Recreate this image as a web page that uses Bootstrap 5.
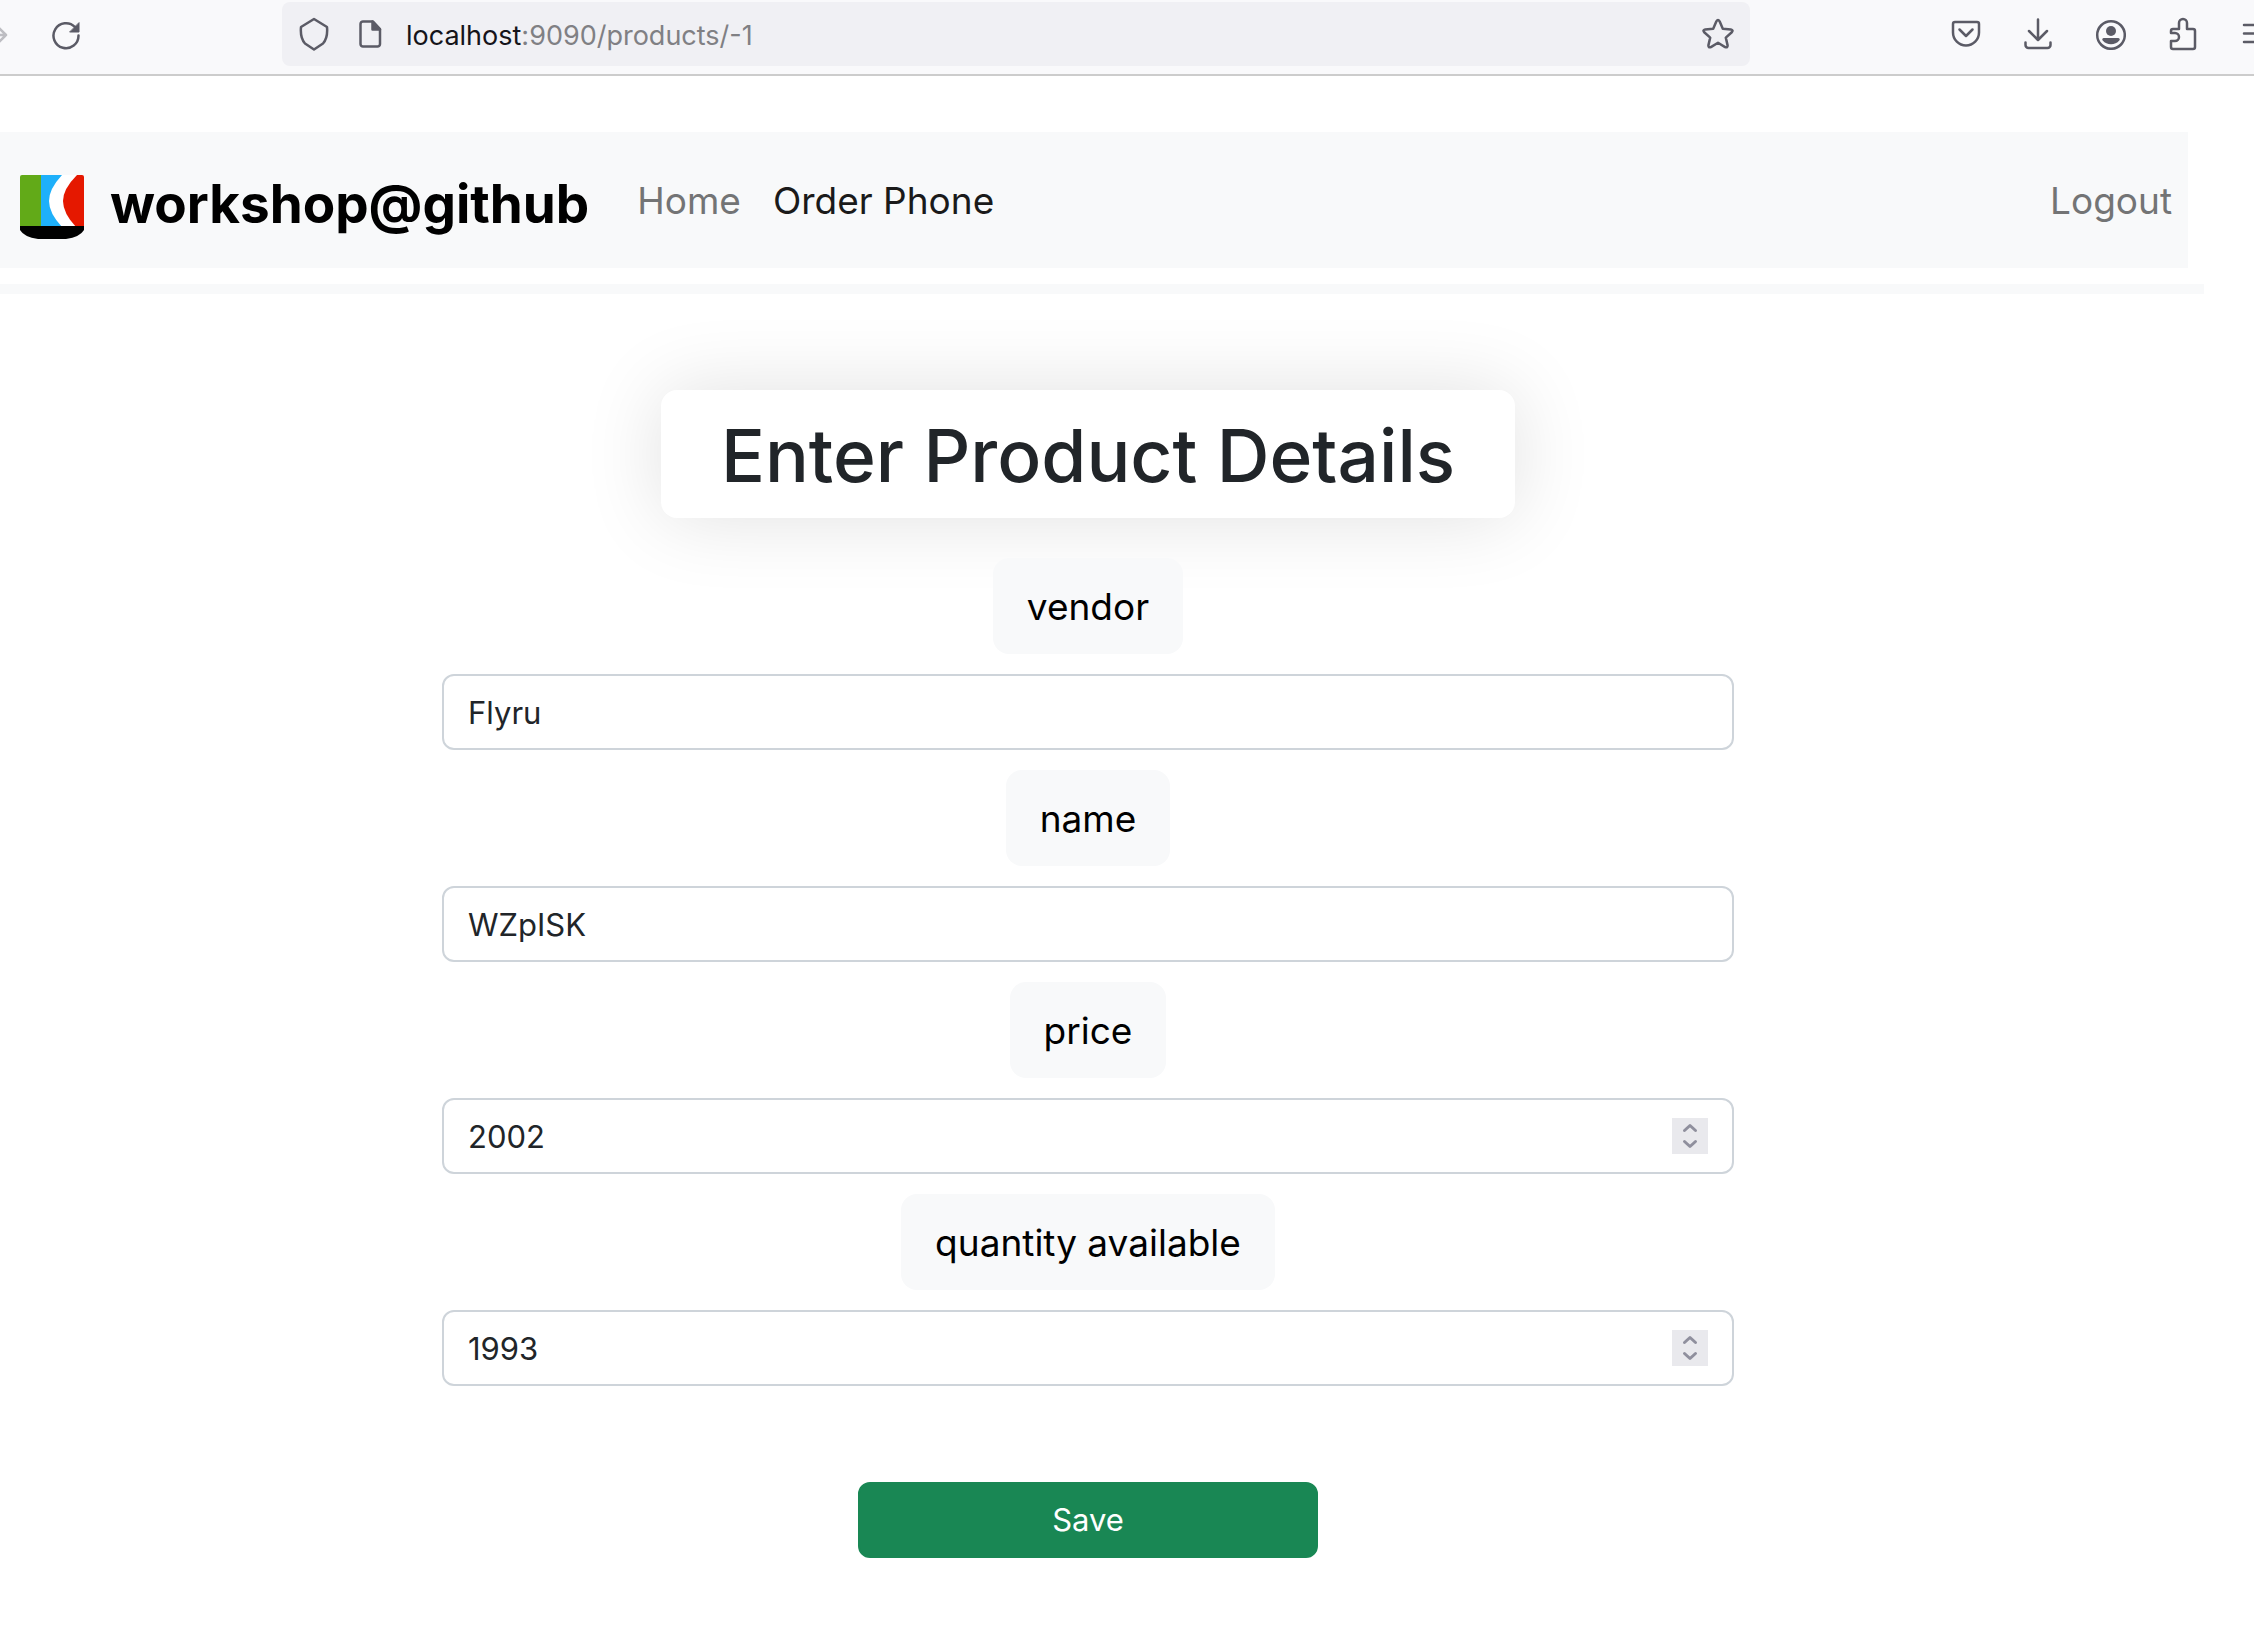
<!DOCTYPE html>
<html lang="en">
<head>
<meta charset="utf-8">
<meta name="viewport" content="width=device-width, initial-scale=1">
<title>Product details</title>
<link href="https://cdn.jsdelivr.net/npm/bootstrap@5.3.0/dist/css/bootstrap.min.css" rel="stylesheet">
<style>
  body { font-family: Inter, "Liberation Sans", sans-serif; font-size: 32px; background: #fff; overflow-x: hidden; }

  /* browser toolbar */
  .toolbar { height: 76px; padding: 2px 0 8px; background: #f9f9fb; border-bottom: 2px solid #ccc; overflow: hidden; }
  .toolbar svg { display: block; fill: none; stroke: #5b5b66; stroke-width: 2.5; stroke-linecap: round; stroke-linejoin: round; }
  .tool-btn { width: 72px; height: 64px; border: 0; padding: 0; background: none; flex: none; display: flex; align-items: center; justify-content: center; }
  .tools-left { width: 282px; flex: none; }
  .tools-left .tool-btn:first-child { margin-left: -42px; }
  .tools-right { width: 504px; padding-left: 180px; flex: none; }
  .address { height: 64px; background: #f0f0f4; border-radius: 8px; padding: 0 16px; min-width: 0; }
  .page-icon { margin: 0 21px 0 27px; }
  .address-text { font-size: 27px; line-height: 40px; padding-top: 3px; color: #808084; white-space: nowrap; }
  .address-text b { font-weight: 400; color: #15141a; }

  /* site header */
  .site-head { margin: 40px 50px 0 0; padding: 16px 16px 16px 0; border-bottom: 10px solid #f8f9fa; }
  .site-nav { height: 136px; padding: 0 0 0 20px; }
  .site-nav .navbar-brand { font-size: 53px; line-height: 64px; font-weight: 700; color: #000; gap: 26px; margin-right: 32px; padding: 14px 0 0; }
  .site-nav .navbar-brand span { padding-bottom: 6px; }
  .site-nav .nav-link { font-size: 37px; line-height: 60px; padding: 10px 16px 8px !important; color: #737475; }
  .site-nav .nav-link.active { color: #1a1a1a; }

  /* form */
  .page-main { padding: 96px 78px 0 0; }
  .page-title { font-size: 73px; line-height: 96px; font-weight: 500; color: #212529; padding: 18px 60px 14px; border-radius: 16px; background: #fff; box-shadow: 0 0 80px rgba(0,0,0,.12); margin: 0 0 40px; }
  .product-form { max-width: 1292px; }
  .field-label { font-size: 37px; line-height: 48px; padding: 25px 34px 23px; border-radius: 16px; background: #f8f9fa; color: #000; margin-bottom: 20px; position: relative; }
  .product-form .form-control { height: 76px; font-size: 31px; line-height: 48px; padding: 12px 24px; border: 2px solid #ced4da; border-radius: 12px; color: #212529; margin-bottom: 20px; }
  input[type=number]::-webkit-inner-spin-button {
    -webkit-appearance: none; opacity: 1; width: 36px; height: 36px; margin: 0;
    background: #e9e9ed url("data:image/svg+xml,%3Csvg xmlns='http://www.w3.org/2000/svg' width='36' height='36' fill='none' stroke='%238f8f9d' stroke-width='3' stroke-linecap='round' stroke-linejoin='round'%3E%3Cpath d='M12.500 12.500l5.500-5 5.500 5M12.500 23.500l5.500 5 5.500-5'/%3E%3C/svg%3E") center no-repeat;
  }
  .save-btn { width: 460px; max-width: 100%; height: 76px; font-size: 31px; line-height: 48px; padding: 12px 24px; border-radius: 12px; margin-top: 76px; background: #198754; border: 2px solid #198754; }
</style>
<script src="https://cdn.jsdelivr.net/npm/bootstrap@5.3.0/dist/js/bootstrap.bundle.min.js"></script>
</head>
<body>

<div class="toolbar d-flex align-items-center">
  <div class="tools-left d-flex align-items-center">
    <button class="tool-btn" type="button" aria-label="Forward" disabled>
      <svg width="32" height="32" viewBox="0 0 32 32" style="stroke:#bdbdc2"><path d="M4 17h24M18 7l10 10-10 10"/></svg>
    </button>
    <button class="tool-btn" type="button" aria-label="Reload">
      <svg width="32" height="32" viewBox="0 0 32 32"><path d="M28.500 17.500A12.500 12.500 0 1 1 25 9"/><path d="M29 5v9h-9z" fill="#5b5b66" stroke-width="1"/></svg>
    </button>
  </div>
  <div class="address d-flex align-items-center flex-grow-1">
    <svg width="32" height="34" viewBox="0 0 32 34"><path d="M16 2 29 10Q30 21 25 26.500L16 32.500 7 26.500Q2 21 3 10Z"/></svg>
    <svg class="page-icon" width="28" height="32" viewBox="2 0 28 32"><path d="M8 3.500h10l7 7.500v15a2.500 2.500 0 0 1-2.500 2.500H8A2.500 2.500 0 0 1 5.500 26V6A2.500 2.500 0 0 1 8 3.500z"/><path d="M17.500 3.500v8H25z" fill="#5b5b66"/></svg>
    <span class="address-text"><b>localhost</b>:9090/products/-1</span>
    <button class="tool-btn ms-auto w-auto" type="button" aria-label="Bookmark this page">
      <svg width="32" height="32" viewBox="0 0 32 32"><path d="M14.400 3.300q1.600-2.600 3.200 0l3.200 7.400 8 .7q2.800.6 1 2.800l-6 5.400 1.800 7.800q.1 2.600-2.500 1.700L16 24.800l-7.100 4.300q-2.600.9-2.500-1.700l1.800-7.800-6-5.400q-1.800-2.200 1-2.800l8-.7z"/></svg>
    </button>
  </div>
  <div class="tools-right d-flex align-items-center">
    <button class="tool-btn" type="button" aria-label="Save to Pocket">
      <svg width="32" height="32" viewBox="0 0 32 32"><path d="M5 4h22a2 2 0 0 1 2 2v8.500a13 13 0 0 1-26 0V6a2 2 0 0 1 2-2z"/><path d="M9.500 11.500l6.500 6.500 6.500-6.500"/></svg>
    </button>
    <button class="tool-btn" type="button" aria-label="Downloads">
      <svg width="32" height="32" viewBox="0 0 32 32"><path d="M16 1.500v20M7 13l9 9 9-9M3.500 24.500v2.500a3 3 0 0 0 3 3h19a3 3 0 0 0 3-3v-2.500"/></svg>
    </button>
    <button class="tool-btn" type="button" aria-label="Account">
      <svg width="32" height="32" viewBox="0 0 32 32"><circle cx="17" cy="17" r="13.800"/><circle cx="17" cy="13" r="5" fill="#5b5b66" stroke="none"/><path d="M10 20h14a1.500 1.500 0 0 1 1.300 2.500 11 11 0 0 1-16.600 0A1.500 1.500 0 0 1 10 20z" fill="#5b5b66" stroke="none"/></svg>
    </button>
    <button class="tool-btn" type="button" aria-label="Extensions">
      <svg width="32" height="34" viewBox="0 0 32 34"><path d="M13 12V6a4 4 0 0 1 8 0v6h6a2 2 0 0 1 2 2v16a2 2 0 0 1-2 2H7a2 2 0 0 1-2-2v-6h4a4 4 0 0 0 0-8H5v-2a2 2 0 0 1 2-2z"/></svg>
    </button>
    <button class="tool-btn" type="button" aria-label="Menu">
      <svg width="32" height="32" viewBox="0 0 32 32"><path d="M6 7h22M6 15.500h22M6 24h22"/></svg>
    </button>
  </div>
</div>

<header class="site-head">
  <nav class="site-nav navbar navbar-expand bg-light">
    <a class="navbar-brand d-flex align-items-center" href="#">
      <svg width="64" height="64" viewBox="0 0 64 64" aria-hidden="true">
        <path fill="#fff" d="M1 0h62v52H1z"/>
        <path fill="#62aa18" d="M2 0h19v52H0V2q0-2 2-2z"/>
        <path fill="#1eb0fa" d="M21 0h21Q29 14 29 26t13 26H21z"/>
        <path fill="#e51800" d="M57 0h5q2 0 2 2v50h-8Q43 38 43 26T57 0z"/>
        <path d="M0 51h64v4q-4 7-18 9H18Q4 62 0 55z"/>
      </svg>
      <span>workshop@github</span>
    </a>
    <div class="navbar-nav flex-grow-1">
      <a class="nav-link" href="#">Home</a>
      <a class="nav-link active" aria-current="page" href="#">Order Phone</a>
      <a class="nav-link ms-auto" href="#">Logout</a>
    </div>
  </nav>
</header>

<main class="page-main d-flex flex-column align-items-center">
  <h1 class="page-title">Enter Product Details</h1>
  <form class="product-form w-100 d-flex flex-column align-items-center">
    <label class="field-label" for="vendor">vendor</label>
    <input class="form-control" id="vendor" type="text" value="Flyru">
    <label class="field-label" for="name">name</label>
    <input class="form-control" id="name" type="text" value="WZpISK">
    <label class="field-label" for="price">price</label>
    <input class="form-control" id="price" type="number" value="2002">
    <label class="field-label" for="quantity">quantity available</label>
    <input class="form-control" id="quantity" type="number" value="1993">
    <button class="save-btn btn btn-success" type="submit">Save</button>
  </form>
</main>

</body>
</html>
